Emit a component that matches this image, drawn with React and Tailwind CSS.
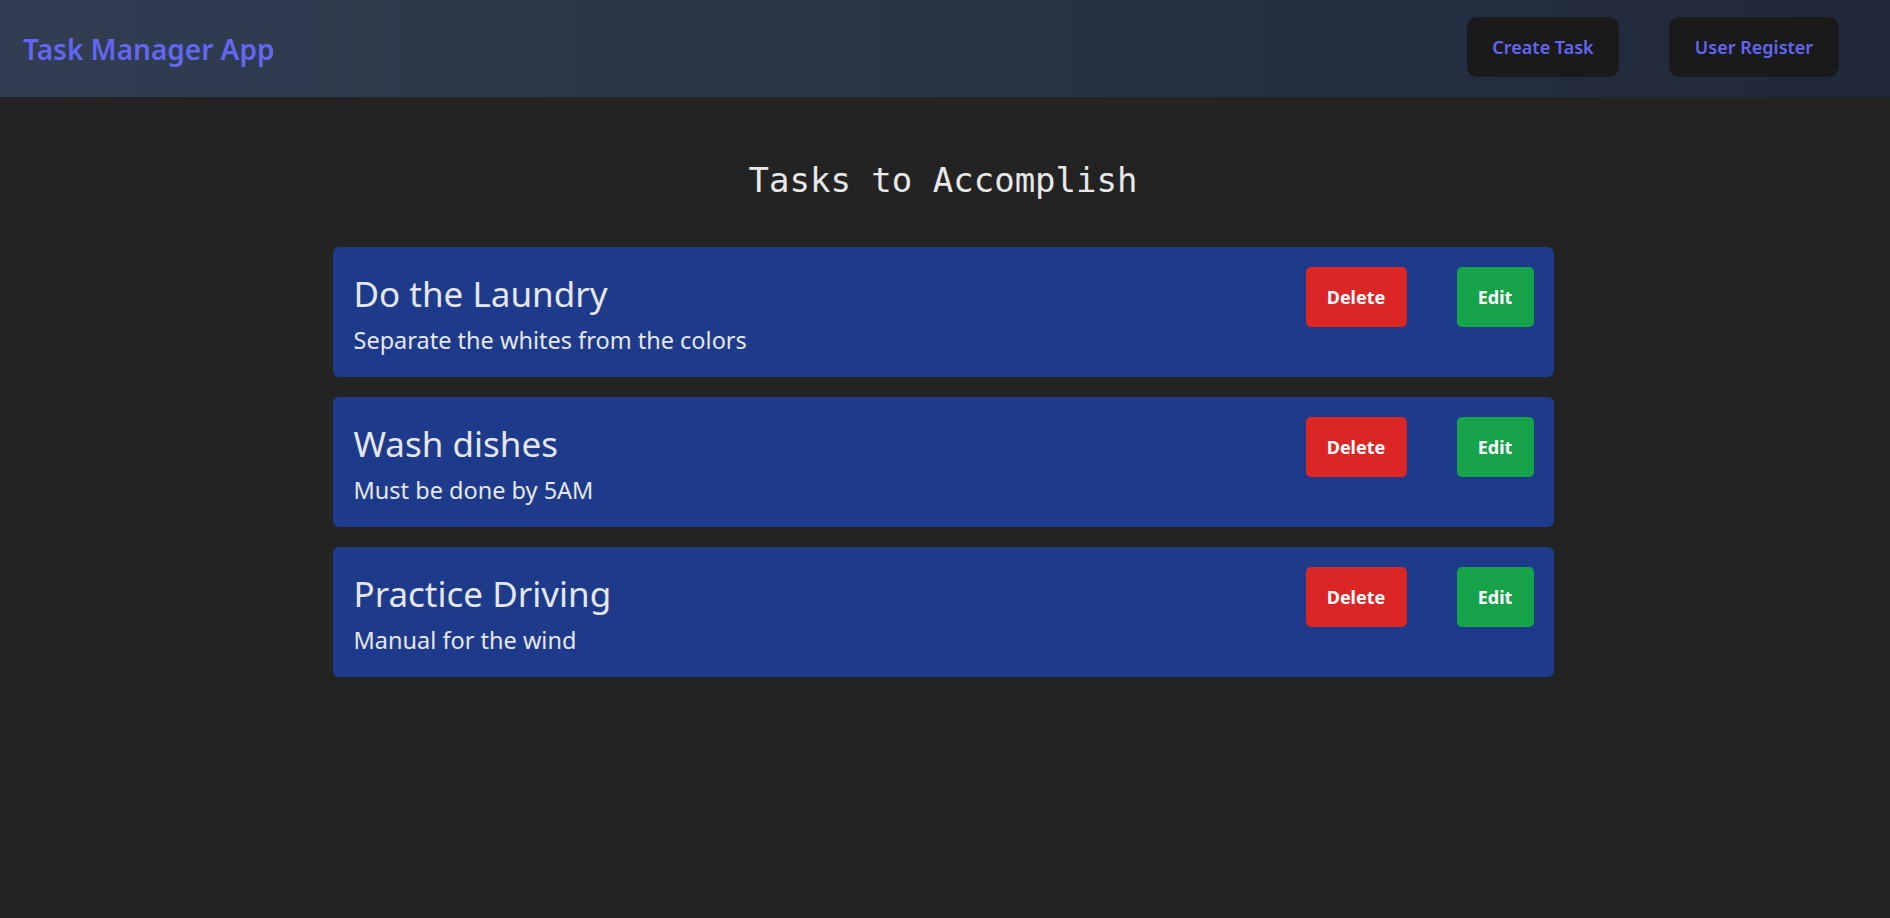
import React from "react";

const tasks = [
  { title: "Do the Laundry", desc: "Separate the whites from the colors" },
  { title: "Wash dishes", desc: "Must be done by 5AM" },
  { title: "Practice Driving", desc: "Manual for the wind" },
];

export default function App() {
  return (
    <div className="min-h-[918px] bg-[#232323] font-['Noto_Sans',sans-serif]">
      <header className="h-[97px] flex items-center justify-between bg-gradient-to-r from-[#313d50] to-[#1f293b] pl-[23px] pr-[51px]">
        <h1 className="text-[28px] font-semibold text-[#6366f1] leading-none">Task Manager App</h1>
        <nav className="flex items-center gap-[50px] mb-[3px]">
          <button className="h-[60px] w-[152px] rounded-[10px] bg-[#1a1a1a] text-[#6366f1] text-[18px] font-semibold">
            Create Task
          </button>
          <button className="h-[60px] w-[170px] rounded-[10px] bg-[#1a1a1a] text-[#6366f1] text-[18px] font-semibold">
            User Register
          </button>
        </nav>
      </header>
      <main className="flex flex-col items-center pr-[4px]">
        <h2 className="mt-[63px] text-[34px] leading-[40px] text-[#e8e8e8] font-['DejaVu_Sans_Mono',monospace]">
          Tasks to Accomplish
        </h2>
        <div className="mt-[47px] w-[1221px] flex flex-col gap-[20px]">
          {tasks.map((t) => (
            <div key={t.title} className="h-[130px] rounded-[6px] bg-[#1e3a8a] p-[20px] flex justify-between">
              <div className="flex flex-col pt-[4px] pl-[1px] text-[#e5e7f0]">
                <div className="text-[35px] leading-[46px]">{t.title}</div>
                <div className="mt-[8px] text-[23.5px] leading-[30px]">{t.desc}</div>
              </div>
              <div className="flex gap-[50px] items-start">
                <button className="h-[60px] w-[101px] rounded-[5px] bg-[#dc2626] text-white text-[18px] font-bold">Delete</button>
                <button className="h-[60px] w-[77px] rounded-[5px] bg-[#16a34a] text-white text-[18px] font-bold">Edit</button>
              </div>
            </div>
          ))}
        </div>
      </main>
    </div>
  );
}
